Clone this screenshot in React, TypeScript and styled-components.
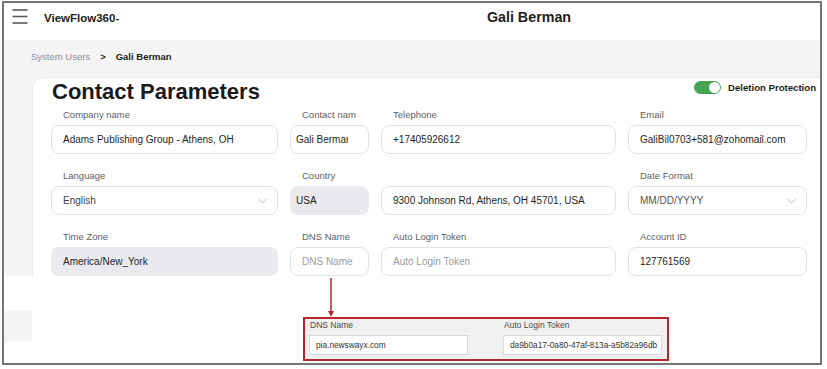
import * as React from 'react'
import styled, { createGlobalStyle } from 'styled-components'

const colors = {
  frame: '#767676',
  canvas: '#f4f4f5',
  cardEdge: '#ebebee',
  border: '#e2e2e6',
  filled: '#e9e9ee',
  text: '#1f1f23',
  label: '#5e5e66',
  muted: '#9a9aa2',
  crumb: '#8c8c96',
  chevron: '#bdbdc4',
  green: '#46a352',
  red: '#b8262d',
}

const font = `"Liberation Sans", Arial, sans-serif`

const GlobalStyle = createGlobalStyle`
  html, body {
    margin: 0;
    padding: 0;
    background: #fff;
  }
  body {
    font-family: ${font};
    color: ${colors.text};
  }
  * {
    box-sizing: border-box;
  }
`

const Frame = styled.div`
  margin: 1px 0 0 2px;
  width: 820px;
  height: 364px;
  border: 2px solid ${colors.frame};
  display: flex;
  flex-direction: column;
  overflow: hidden;
  background: #fff;
`

/* top bar */

const TopBar = styled.header`
  flex: none;
  height: 37px;
  display: flex;
  align-items: flex-start;
  padding: 6px 8px 0;
  background: #fff;
`

const Brand = styled.div`
  width: 234px;
  display: flex;
  align-items: center;
  gap: 16px;
  font-size: 11.5px;
  font-weight: 700;
  color: #1d1d21;

  span {
    padding-top: 2px;
  }
`

const PageTitle = styled.h1`
  flex: 1;
  margin: 0;
  text-align: center;
  font-size: 14.3px;
  line-height: 17px;
  font-weight: 700;
  color: #1d1d21;
`

/* grey workspace */

const Workspace = styled.main`
  flex: none;
  background: ${colors.canvas};
  padding-left: 28px;
`

const Breadcrumb = styled.nav`
  height: 37px;
  padding-top: 10px;
  margin-left: -1px;
  font-size: 9.5px;
  line-height: 14px;
  color: ${colors.crumb};

  b {
    color: #1d1d21;
  }
`

const CrumbSep = styled.b`
  margin: 0 10px;
`

const Card = styled.section`
  background: #fff;
  border: 1px solid ${colors.cardEdge};
  border-right: none;
  border-bottom: none;
  border-top-left-radius: 12px;
  padding: 1.5px 4px 0 18px;
`

const CardHead = styled.div`
  height: 24px;
  margin-bottom: 4.5px;
  display: flex;
  justify-content: space-between;
  align-items: flex-start;
`

const CardTitle = styled.h2`
  margin: 0;
  padding-left: 1px;
  font-size: 22px;
  line-height: 24px;
  font-weight: 700;
  color: #1a1a1e;
`

const ToggleRow = styled.label`
  margin-top: 1.5px;
  display: flex;
  align-items: center;
  gap: 7px;
  font-size: 9.6px;
  font-weight: 700;
  color: #1d1d21;
`

const Switch = styled.span<{ $on: boolean }>`
  position: relative;
  width: 27px;
  height: 13px;
  border-radius: 7px;
  background: ${(p) => (p.$on ? colors.green : '#ccc')};

  &::after {
    content: '';
    position: absolute;
    top: 1px;
    left: ${(p) => (p.$on ? '15px' : '1px')};
    width: 11px;
    height: 11px;
    border-radius: 50%;
    background: #fff;
  }
`

const FieldGrid = styled.div`
  display: grid;
  grid-template-columns: 227px 79px 235px 179px;
  column-gap: 12px;
  row-gap: 15px;
`

const Field = styled.div`
  display: flex;
  flex-direction: column;
  gap: 4px;
  min-width: 0;
`

const FieldLabel = styled.span`
  margin: 0 13px 0 12px;
  font-size: 9.5px;
  line-height: 13px;
  color: ${colors.label};
  white-space: nowrap;
  overflow: hidden;
`

const TextInput = styled.input<{ $filled?: boolean; $compact?: boolean }>`
  width: 100%;
  height: 29px;
  border: 1px solid ${(p) => (p.$filled ? 'transparent' : colors.border)};
  border-radius: 8px;
  background: ${(p) => (p.$filled ? colors.filled : '#fff')};
  padding: ${(p) => (p.$compact ? '0 20px 0 5px' : '0 11px')};
  font: 10px ${font};
  color: ${colors.text};
  outline: none;

  &::placeholder {
    color: ${colors.muted};
  }
`

const SelectBox = styled.div<{ $tone?: string }>`
  height: 29px;
  display: flex;
  align-items: center;
  justify-content: space-between;
  border: 1px solid ${colors.border};
  border-radius: 8px;
  background: #fff;
  padding: 0 10px 0 11px;
  font-size: 10px;
  color: ${(p) => p.$tone || colors.text};
`

/* annotation under the screenshot */

const Annotation = styled.section`
  flex: 1;
  display: flex;
  background: #fff;
`

const GutterPatch = styled.div`
  width: 28px;
  height: 31px;
  margin-top: 35px;
  background: ${colors.canvas};
`

const Callout = styled.div`
  margin-left: 271px;
  display: flex;
  flex-direction: column;
`

const ArrowSvg = styled.svg`
  display: block;
  margin-left: 23px;
`

const CalloutBox = styled.div`
  width: 366px;
  height: 44px;
  border: 2px solid ${colors.red};
  background: #f0f0f0;
  padding: 0 5px 4px 4px;
  display: grid;
  grid-template-columns: 159px 159px;
  column-gap: 35px;
`

const CalloutField = styled.div`
  display: flex;
  flex-direction: column;
  gap: 4px;
`

const CalloutLabel = styled.span`
  padding-left: 1px;
  font-size: 8.5px;
  line-height: 12px;
  color: #4a4a4a;
`

const CalloutInput = styled.input`
  height: 20px;
  width: 100%;
  border: 1px solid #d9d9d9;
  background: #fff;
  padding: 0 0 0 6px;
  font: 8.3px ${font};
  color: #333;
  outline: none;
`

const Hamburger = () => (
  <svg width="16" height="15" viewBox="0 0 16 15">
    <g stroke="#5a5a5a" strokeWidth="1.6">
      <line x1="0.5" y1="1" x2="15.5" y2="1" />
      <line x1="0.5" y1="7.5" x2="15.5" y2="7.5" />
      <line x1="0.5" y1="14" x2="15.5" y2="14" />
    </g>
  </svg>
)

const Chevron = () => (
  <svg width="9" height="6" viewBox="0 0 9 6">
    <path d="M0.5 1 L4.5 5 L8.5 1" fill="none" stroke={colors.chevron} strokeWidth="1" />
  </svg>
)

type Spec = {
  label: string
  value?: string
  placeholder?: string
  filled?: boolean
  compact?: boolean
  select?: boolean
  tone?: string
}

const fields: Spec[] = [
  { label: 'Company name', value: 'Adams Publishing Group - Athens, OH' },
  { label: 'Contact name', value: 'Gali Berman', compact: true },
  { label: 'Telephone', value: '+17405926612' },
  { label: 'Email', value: 'GaliBil0703+581@zohomail.com' },
  { label: 'Language', value: 'English', select: true, tone: '#444' },
  { label: 'Country', value: 'USA', filled: true, compact: true },
  { label: '\u00a0', value: '9300 Johnson Rd, Athens, OH 45701, USA' },
  { label: 'Date Format', value: 'MM/DD/YYYY', select: true, tone: '#555' },
  { label: 'Time Zone', value: 'America/New_York', filled: true },
  { label: 'DNS Name', placeholder: 'DNS Name' },
  { label: 'Auto Login Token', placeholder: 'Auto Login Token' },
  { label: 'Account ID', value: '127761569' },
]

const App: React.FC = () => (
  <>
    <GlobalStyle />
    <Frame>
      <TopBar>
        <Brand>
          <Hamburger />
          <span>ViewFlow360-</span>
        </Brand>
        <PageTitle>Gali Berman</PageTitle>
      </TopBar>

      <Workspace>
        <Breadcrumb>
          System Users<CrumbSep>&gt;</CrumbSep>
          <b>Gali Berman</b>
        </Breadcrumb>
        <Card>
          <CardHead>
            <CardTitle>Contact Parameters</CardTitle>
            <ToggleRow>
              <Switch $on />
              Deletion Protection
            </ToggleRow>
          </CardHead>
          <FieldGrid>
            {fields.map((f, i) => (
              <Field key={i}>
                <FieldLabel>{f.label}</FieldLabel>
                {f.select ? (
                  <SelectBox $tone={f.tone}>
                    {f.value}
                    <Chevron />
                  </SelectBox>
                ) : (
                  <TextInput
                    readOnly
                    value={f.value ?? ''}
                    placeholder={f.placeholder}
                    $filled={f.filled}
                    $compact={f.compact}
                  />
                )}
              </Field>
            ))}
          </FieldGrid>
        </Card>
      </Workspace>

      <Annotation>
        <GutterPatch />
        <Callout>
          <ArrowSvg width="10" height="41" viewBox="0 0 10 41">
            <line x1="5" y1="2" x2="5" y2="36" stroke={colors.red} strokeWidth="1.5" />
            <path d="M2 35 L8 35 L5 41 Z" fill={colors.red} />
          </ArrowSvg>
          <CalloutBox>
            <CalloutField>
              <CalloutLabel>DNS Name</CalloutLabel>
              <CalloutInput readOnly value="pia.newswayx.com" />
            </CalloutField>
            <CalloutField>
              <CalloutLabel>Auto Login Token</CalloutLabel>
              <CalloutInput readOnly value="da9b0a17-0a80-47af-813a-a5b82a96db" />
            </CalloutField>
          </CalloutBox>
        </Callout>
      </Annotation>
    </Frame>
  </>
)

export default App
